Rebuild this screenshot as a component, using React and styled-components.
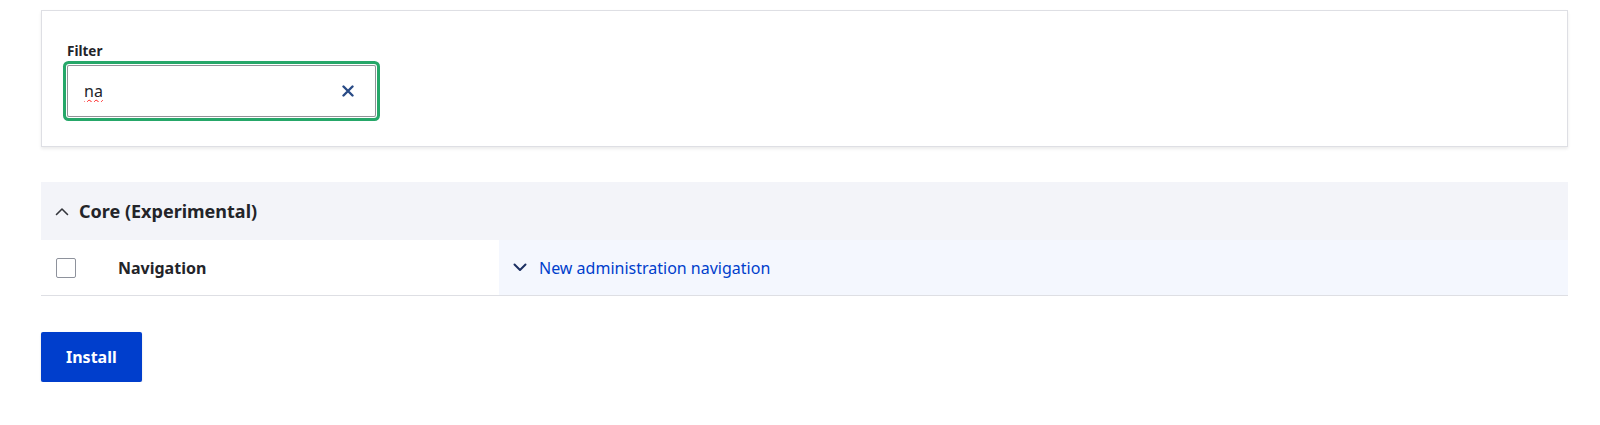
import styled, { createGlobalStyle } from 'styled-components';

const GlobalStyle = createGlobalStyle`
  body {
    margin: 0;
    background: #fff;
    color: #232429;
    font-family: "Noto Sans", "Open Sans", Arial, sans-serif;
  }
`;

const Page = styled.div`
  padding: 10px 32px 0 41px;
`;

const FilterCard = styled.div`
  background: #fff;
  border: 1px solid #dedfe4;
  box-shadow: 0 2px 3px rgba(0, 0, 0, 0.08);
  padding: 31px 25px 29px;
`;

const Label = styled.label`
  display: block;
  font-size: 13.5px;
  font-weight: 700;
  line-height: 18px;
  margin-bottom: 5px;
`;

const InputWrap = styled.div`
  position: relative;
  width: 309px;
  border-radius: 2px;
  box-shadow: 0 0 0 1px #fff, 0 0 0 4px #26a769;
`;

const SearchInput = styled.input`
  box-sizing: border-box;
  display: block;
  width: 100%;
  height: 52px;
  border: 1px solid #919297;
  border-radius: 2px;
  padding: 0 40px 0 16px;
  font-family: inherit;
  font-size: 16px;
  line-height: 32px;
  color: #232429;
  outline: none;
  text-decoration: underline wavy #ff1a1a;
  text-decoration-thickness: 1.2px;
  text-underline-offset: 2px;
`;

const ClearButton = styled.button`
  position: absolute;
  right: 20px;
  top: 50%;
  transform: translateY(-50%);
  width: 16px;
  height: 16px;
  padding: 0;
  border: 0;
  background: transparent;
  display: flex;
  align-items: center;
  justify-content: center;
  cursor: pointer;
`;

const Section = styled.div`
  margin-top: 35px;
`;

const SectionHeader = styled.div`
  height: 58px;
  background: #f3f4f9;
  display: flex;
  align-items: center;
  gap: 10px;
  padding-left: 14px;
  font-size: 18px;
  font-weight: 700;
`;

const Row = styled.div`
  display: grid;
  grid-template-columns: 458px 1fr;
  height: 55px;
  border-bottom: 1px solid #dedfe4;
`;

const NameCell = styled.div`
  display: flex;
  align-items: center;
  gap: 42px;
  padding-left: 15px;
  font-size: 16px;
  font-weight: 700;
`;

const Checkbox = styled.input`
  appearance: none;
  margin: 0;
  width: 20px;
  height: 20px;
  border: 1px solid #8e929c;
  border-radius: 2px;
  background: #fff;
`;

const DescCell = styled.div`
  background: #f4f7fe;
  display: flex;
  align-items: center;
  gap: 12px;
  padding-left: 14px;
  font-size: 16px;
  color: #003ecc;
`;

const InstallButton = styled.button`
  margin-top: 36px;
  height: 50px;
  padding: 0 25px;
  border: 0;
  border-radius: 2px;
  background: #003ecc;
  color: #fff;
  font-family: inherit;
  font-size: 16px;
  font-weight: 700;
  box-shadow: 0 1px 2px rgba(0, 0, 0, 0.15);
`;

function Chevron({ up, color, size = 14 }) {
  return (
    <svg width={size} height={size / 2 + 2} viewBox="0 0 14 8" fill="none">
      <path
        d={up ? 'M1.5 7L7 1.5L12.5 7' : 'M1.5 1L7 6.5L12.5 1'}
        stroke={color}
        strokeWidth={up ? 1.6 : 2}
        strokeLinecap="round"
        strokeLinejoin="round"
      />
    </svg>
  );
}

export default function App() {
  return (
    <Page>
      <GlobalStyle />
      <FilterCard>
        <Label htmlFor="filter">Filter</Label>
        <InputWrap>
          <SearchInput id="filter" type="text" defaultValue="na" spellCheck={false} />
          <ClearButton aria-label="Clear">
            <svg width="12" height="12" viewBox="0 0 12 12">
              <path d="M1.5 1.5L10.5 10.5M10.5 1.5L1.5 10.5" stroke="#294b86" strokeWidth="2.4" strokeLinecap="round" />
            </svg>
          </ClearButton>
        </InputWrap>
      </FilterCard>

      <Section>
        <SectionHeader>
          <Chevron up color="#34363c" />
          Core (Experimental)
        </SectionHeader>
        <Row>
          <NameCell>
            <Checkbox type="checkbox" />
            Navigation
          </NameCell>
          <DescCell>
            <Chevron color="#1b2f62" />
            New administration navigation
          </DescCell>
        </Row>
      </Section>

      <InstallButton>Install</InstallButton>
    </Page>
  );
}
